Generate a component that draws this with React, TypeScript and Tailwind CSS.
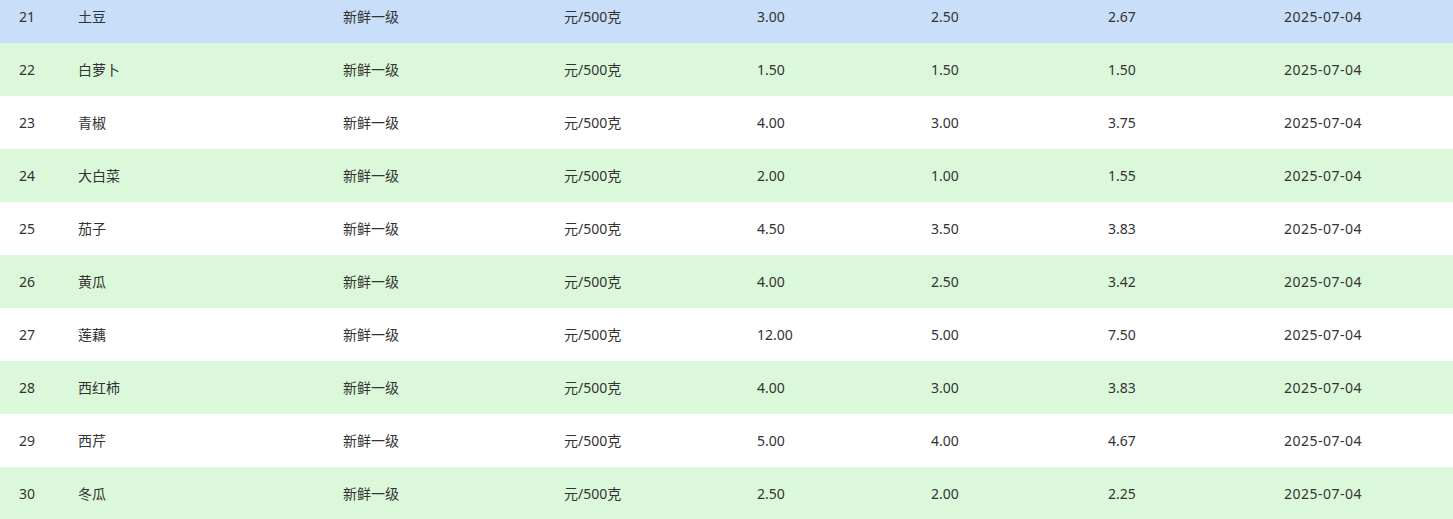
const rows = [
  { id: 21, name: "土豆", max: "3.00", min: "2.50", avg: "2.67" },
  { id: 22, name: "白萝卜", max: "1.50", min: "1.50", avg: "1.50" },
  { id: 23, name: "青椒", max: "4.00", min: "3.00", avg: "3.75" },
  { id: 24, name: "大白菜", max: "2.00", min: "1.00", avg: "1.55" },
  { id: 25, name: "茄子", max: "4.50", min: "3.50", avg: "3.83" },
  { id: 26, name: "黄瓜", max: "4.00", min: "2.50", avg: "3.42" },
  { id: 27, name: "莲藕", max: "12.00", min: "5.00", avg: "7.50" },
  { id: 28, name: "西红柿", max: "4.00", min: "3.00", avg: "3.83" },
  { id: 29, name: "西芹", max: "5.00", min: "4.00", avg: "4.67" },
  { id: 30, name: "冬瓜", max: "2.50", min: "2.00", avg: "2.25" },
];

export default function App() {
  return (
    <div className="h-[519px] w-[1453px] overflow-hidden bg-white text-[14px] text-[#333] [font-family:'Noto_Sans','Noto_Sans_CJK_SC',sans-serif]">
      <div className="-mt-[10px]">
        {rows.map((r, i) => {
          const bg = i === 0 ? "bg-[#c9dff9]" : i % 2 === 1 ? "bg-[#dbf9da]" : "bg-white";
          return (
            <div
              key={r.id}
              className={`grid h-[53px] grid-cols-[59px_265px_221px_193px_174px_177px_176px_1fr] items-center pl-[19px] ${bg}`}
            >
              <span>{r.id}</span>
              <span>{r.name}</span>
              <span>新鲜一级</span>
              <span>元/500克</span>
              <span>{r.max}</span>
              <span>{r.min}</span>
              <span>{r.avg}</span>
              <span className="tracking-[0.5px]">2025-07-04</span>
            </div>
          );
        })}
      </div>
    </div>
  );
}
